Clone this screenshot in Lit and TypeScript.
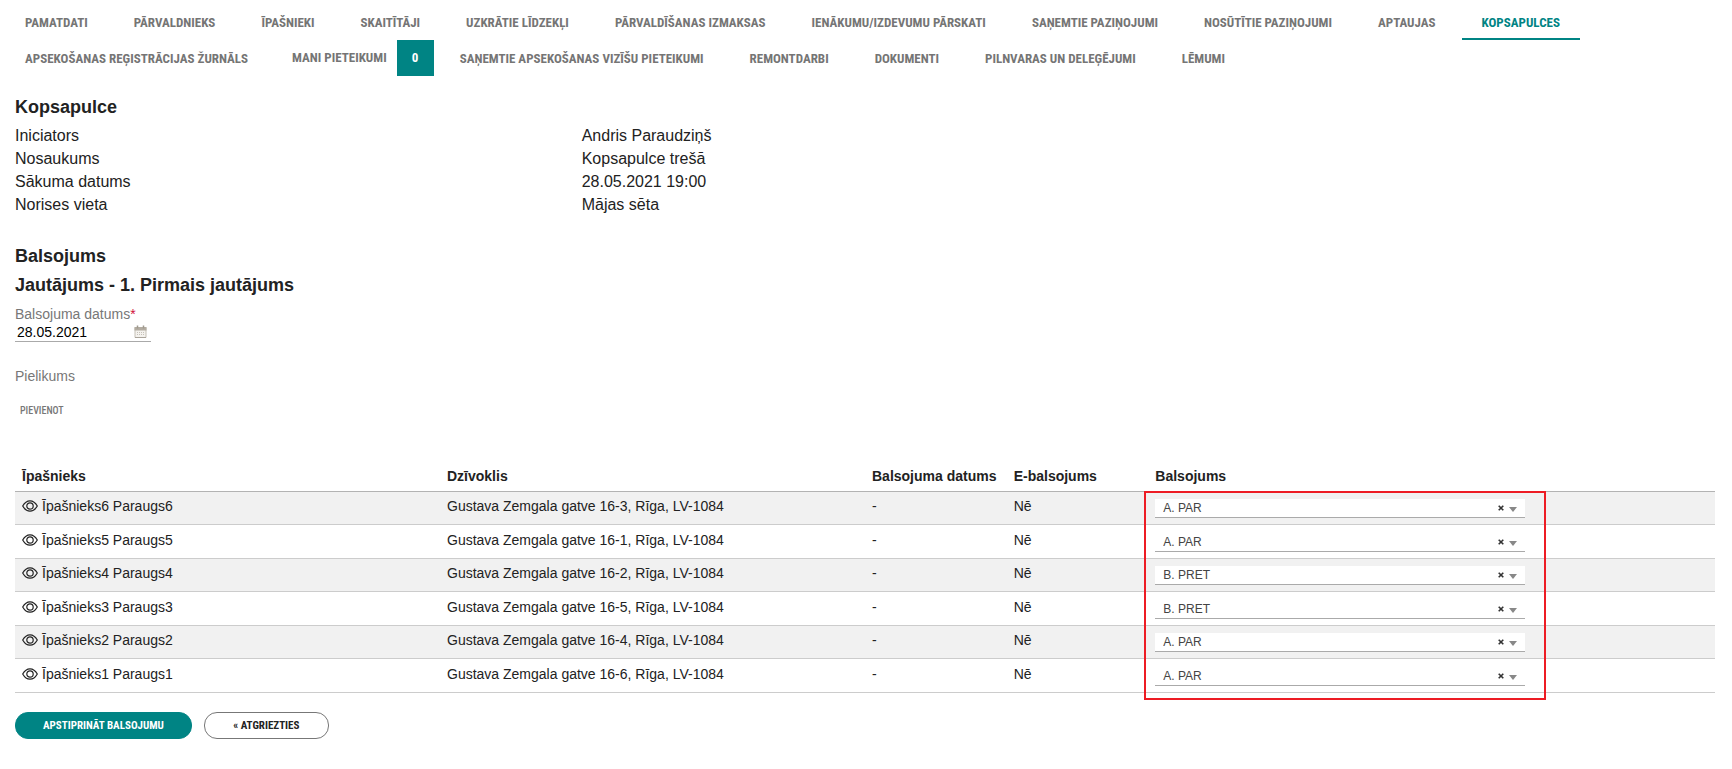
import { LitElement, html, css, svg } from "lit";
import { customElement, property, state } from "lit/decorators.js";
import { classMap } from "lit/directives/class-map.js";

interface Tab {
  label: string;
  active?: boolean;
  count?: number;
}

interface Vote {
  owner: string;
  flat: string;
  date: string;
  electronic: string;
  choice: string;
}

const TABS: Tab[] = [
  { label: "PAMATDATI" },
  { label: "PĀRVALDNIEKS" },
  { label: "ĪPAŠNIEKI" },
  { label: "SKAITĪTĀJI" },
  { label: "UZKRĀTIE LĪDZEKĻI" },
  { label: "PĀRVALDĪŠANAS IZMAKSAS" },
  { label: "IENĀKUMU/IZDEVUMU PĀRSKATI" },
  { label: "SAŅEMTIE PAZIŅOJUMI" },
  { label: "NOSŪTĪTIE PAZIŅOJUMI" },
  { label: "APTAUJAS" },
  { label: "KOPSAPULCES", active: true },
  { label: "APSEKOŠANAS REĢISTRĀCIJAS ŽURNĀLS" },
  { label: "MANI PIETEIKUMI", count: 0 },
  { label: "SAŅEMTIE APSEKOŠANAS VIZĪŠU PIETEIKUMI" },
  { label: "REMONTDARBI" },
  { label: "DOKUMENTI" },
  { label: "PILNVARAS UN DELEĢĒJUMI" },
  { label: "LĒMUMI" },
];

const DETAILS = [
  ["Iniciators", "Andris Paraudziņš"],
  ["Nosaukums", "Kopsapulce trešā"],
  ["Sākuma datums", "28.05.2021 19:00"],
  ["Norises vieta", "Mājas sēta"],
];

const CHOICES = ["A. PAR", "B. PRET"];

const vote = (n: number, flat: number, choice: string): Vote => ({
  owner: `Īpašnieks${n} Paraugs${n}`,
  flat: `Gustava Zemgala gatve 16-${flat}, Rīga, LV-1084`,
  date: "-",
  electronic: "Nē",
  choice,
});

const eyeIcon = svg`<svg class="eye" viewBox="0 0 16 12" width="16" height="12" fill="none" stroke="#222" stroke-width="1.200" aria-hidden="true">
  <path d="M.7 6C2.6 2.6 5 .8 8 .8S13.400 2.600 15.300 6C13.400 9.400 11 11.200 8 11.200S2.600 9.400.7 6Z"/>
  <circle cx="8" cy="6" r="3.200"/>
</svg>`;

const calendarIcon = svg`<svg viewBox="0 0 13 13" width="13" height="13" aria-hidden="true">
  <path d="M1 2.500h11v10H1z" fill="#f4f2ee" stroke="#c5c0b6"/>
  <path d="M.500 2h12v3.500H.500z" fill="#b3aca1"/>
  <path d="M3.500.5v3M9.500.5v3" stroke="#a09a8f" stroke-width="1.500"/>
  <path d="M3 7.500h7M3 9.500h7" stroke="#c6c1b8" stroke-dasharray="1 1"/>
  <path d="M1 12.500h11" stroke="#aaa49a"/>
</svg>`;

@customElement("vote-select")
class VoteSelect extends LitElement {
  @property() value = "";
  @property() label = "";

  static styles = css`
    :host {
      display: block;
    }
    .field {
      display: grid;
      grid-template-columns: 1fr 13px 10px 6px;
      align-items: center;
      width: 90%;
      height: 19px;
      box-sizing: border-box;
      background: #fff;
      border-bottom: 1px solid #aaa;
    }
    select {
      grid-area: 1 / 1 / 2 / -1;
      width: 100%;
      height: 18px;
      appearance: none;
      border: 0;
      margin: 0;
      padding: 0 36px 0 8px;
      background: none;
      font: 12px/18px "Liberation Sans", Arial, sans-serif;
      color: #444;
    }
    .clear {
      grid-area: 1 / 2;
      display: flex;
      border: 0;
      margin: 0;
      padding: 2px;
      background: none;
    }
    .arrow {
      grid-area: 1 / 3;
      margin-top: 2px;
      pointer-events: none;
    }
  `;

  render() {
    return html`
      <div class="field">
        <select
          aria-label=${this.label}
          @change=${(e: Event) => (this.value = (e.target as HTMLSelectElement).value)}
        >
          <option value="" ?selected=${this.value === ""}></option>
          ${CHOICES.map((c) => html`<option ?selected=${c === this.value}>${c}</option>`)}
        </select>
        <button class="clear" aria-label="Notīrīt" @click=${() => (this.value = "")}>
          <svg viewBox="0 0 6 6" width="6" height="6" aria-hidden="true">
            <path d="M.7.7l4.600 4.600M5.300.7L.7 5.300" stroke="#333" stroke-width="1.600" />
          </svg>
        </button>
        <svg class="arrow" viewBox="0 0 8 5" width="8" height="5" aria-hidden="true">
          <path d="M0 0h8L4 5z" fill="#888" />
        </svg>
      </div>
    `;
  }
}

@customElement("app-root")
class AppRoot extends LitElement {
  @state() private votes: Vote[] = [
    vote(6, 3, "A. PAR"),
    vote(5, 1, "A. PAR"),
    vote(4, 2, "B. PRET"),
    vote(3, 5, "B. PRET"),
    vote(2, 4, "A. PAR"),
    vote(1, 6, "A. PAR"),
  ];

  static styles = css`
    :host {
      display: block;
      background: #fff;
      color: #222;
      font-family: "Liberation Sans", Arial, sans-serif;
      font-size: 14px;
      --accent: #008484;
      --display: "Roboto Condensed", "Open Sans Condensed", Roboto, "Liberation Sans", sans-serif;
    }
    .tabs {
      display: flex;
      flex-wrap: wrap;
      column-gap: 6px;
      padding: 4px 5px 0;
    }
    .tab {
      display: flex;
      align-items: center;
      gap: 10px;
      height: 36px;
      box-sizing: border-box;
      padding: 3px 20px 0;
      border-bottom: 2px solid transparent;
      font: bold 13px/16px var(--display);
      color: #757575;
      text-decoration: none;
      white-space: nowrap;
    }
    .tab.active {
      color: var(--accent);
      border-color: var(--accent);
    }
    .tab.counted {
      padding: 0 0 0 18px;
      border: 0;
    }
    .count {
      width: 37px;
      background: var(--accent);
      color: #fff;
      line-height: 36px;
      text-align: center;
    }
    main {
      padding: 20px 17px 0 15px;
    }
    h2 {
      margin: 0;
      font-size: 18px;
      line-height: 23px;
    }
    h2 + h2 {
      margin-top: 6px;
    }
    .details {
      display: grid;
      grid-template-columns: 1fr 2fr;
      margin: 5px 0 29px;
      font-size: 16px;
      line-height: 23px;
    }
    dt,
    dd {
      margin: 0;
    }
    .label {
      display: block;
      color: #777;
      line-height: 16px;
    }
    .date-label {
      margin-top: 9px;
    }
    .required {
      color: #d0103a;
    }
    .date {
      display: flex;
      align-items: center;
      width: 136px;
      height: 20px;
      box-sizing: border-box;
      padding: 0 4px 0 2px;
      border-bottom: 1px solid #aaa;
    }
    .date input {
      flex: 1;
      min-width: 0;
      padding: 0;
      border: 0;
      background: none;
      font: 14px/18px "Liberation Sans", Arial, sans-serif;
      color: #000;
    }
    .icon-button {
      display: flex;
      padding: 0;
      border: 0;
      background: none;
    }
    .attachment {
      margin-top: 26px;
    }
    .add {
      display: block;
      margin: 19px 0 49px;
      padding: 0 5px;
      border: 0;
      background: none;
      font: 500 10px/16px var(--display);
      color: #777;
    }
    .votes {
      position: relative;
    }
    table {
      width: 100%;
      table-layout: fixed;
      border-collapse: separate;
      border-spacing: 0;
    }
    .wide {
      width: 25%;
    }
    th {
      height: 24px;
      padding: 0 7px 7px;
      border-bottom: 1px solid #b3b3b3;
      text-align: left;
      vertical-align: middle;
      line-height: 16px;
      white-space: nowrap;
      box-sizing: border-box;
    }
    td {
      height: 33px;
      box-sizing: border-box;
      padding: 6px 7px 0;
      border-bottom: 1px solid #ccc;
      vertical-align: top;
      line-height: 16px;
    }
    td.choice {
      padding-top: 7px;
    }
    tr:nth-child(even) td {
      height: 34px;
      padding-top: 7px;
    }
    tr:nth-child(even) td.choice {
      padding-top: 8px;
    }
    tbody tr:nth-child(odd) {
      background: #f1f1f1;
    }
    .owner {
      display: flex;
      align-items: center;
      gap: 4px;
    }
    .highlight {
      position: absolute;
      top: 23px;
      bottom: -7px;
      left: calc(200% / 3 - 4px);
      width: calc(25% - 23px);
      box-sizing: border-box;
      border: 2px solid #ed1c24;
      pointer-events: none;
    }
    .actions {
      display: flex;
      gap: 12px;
      padding: 19px 0 30px;
    }
    .action {
      height: 27px;
      min-width: 125px;
      box-sizing: border-box;
      padding: 0 27px;
      border: 1px solid #777;
      border-radius: 13px;
      background: #fff;
      color: #222;
      font: bold 11px/16px var(--display);
      text-align: center;
    }
    .primary {
      border-color: var(--accent);
      background: var(--accent);
      color: #fff;
    }
  `;

  render() {
    return html`
      <nav class="tabs">
        ${TABS.map(
          (t) => html`<a
            href="#"
            class=${classMap({ tab: true, active: !!t.active, counted: t.count !== undefined })}
            >${t.label}${t.count !== undefined ? html`<span class="count">${t.count}</span>` : ""}</a
          >`
        )}
      </nav>
      <main>
        <h2>Kopsapulce</h2>
        <dl class="details">
          ${DETAILS.map(([name, value]) => html`<dt>${name}</dt><dd>${value}</dd>`)}
        </dl>
        <h2>Balsojums</h2>
        <h2>Jautājums - 1. Pirmais jautājums</h2>
        <label class="label date-label" for="vote-date"
          >Balsojuma datums<span class="required">*</span></label
        >
        <div class="date">
          <input id="vote-date" type="text" value="28.05.2021" />
          <button class="icon-button" aria-label="Kalendārs">${calendarIcon}</button>
        </div>
        <span class="label attachment">Pielikums</span>
        <button class="add">PIEVIENOT</button>
        <div class="votes">
          <table>
            <colgroup>
              <col class="wide" /><col class="wide" /><col /><col /><col class="wide" /><col />
            </colgroup>
            <thead>
              <tr>
                <th>Īpašnieks</th>
                <th>Dzīvoklis</th>
                <th>Balsojuma datums</th>
                <th>E-balsojums</th>
                <th>Balsojums</th>
                <th></th>
              </tr>
            </thead>
            <tbody>
              ${this.votes.map(
                (v) => html`<tr>
                  <td><div class="owner">${eyeIcon}<span>${v.owner}</span></div></td>
                  <td>${v.flat}</td>
                  <td>${v.date}</td>
                  <td>${v.electronic}</td>
                  <td class="choice"><vote-select .value=${v.choice} .label=${v.owner}></vote-select></td>
                  <td></td>
                </tr>`
              )}
            </tbody>
          </table>
          <div class="highlight"></div>
        </div>
        <div class="actions">
          <button class="action primary">APSTIPRINĀT BALSOJUMU</button>
          <button class="action">« ATGRIEZTIES</button>
        </div>
      </main>
    `;
  }
}
